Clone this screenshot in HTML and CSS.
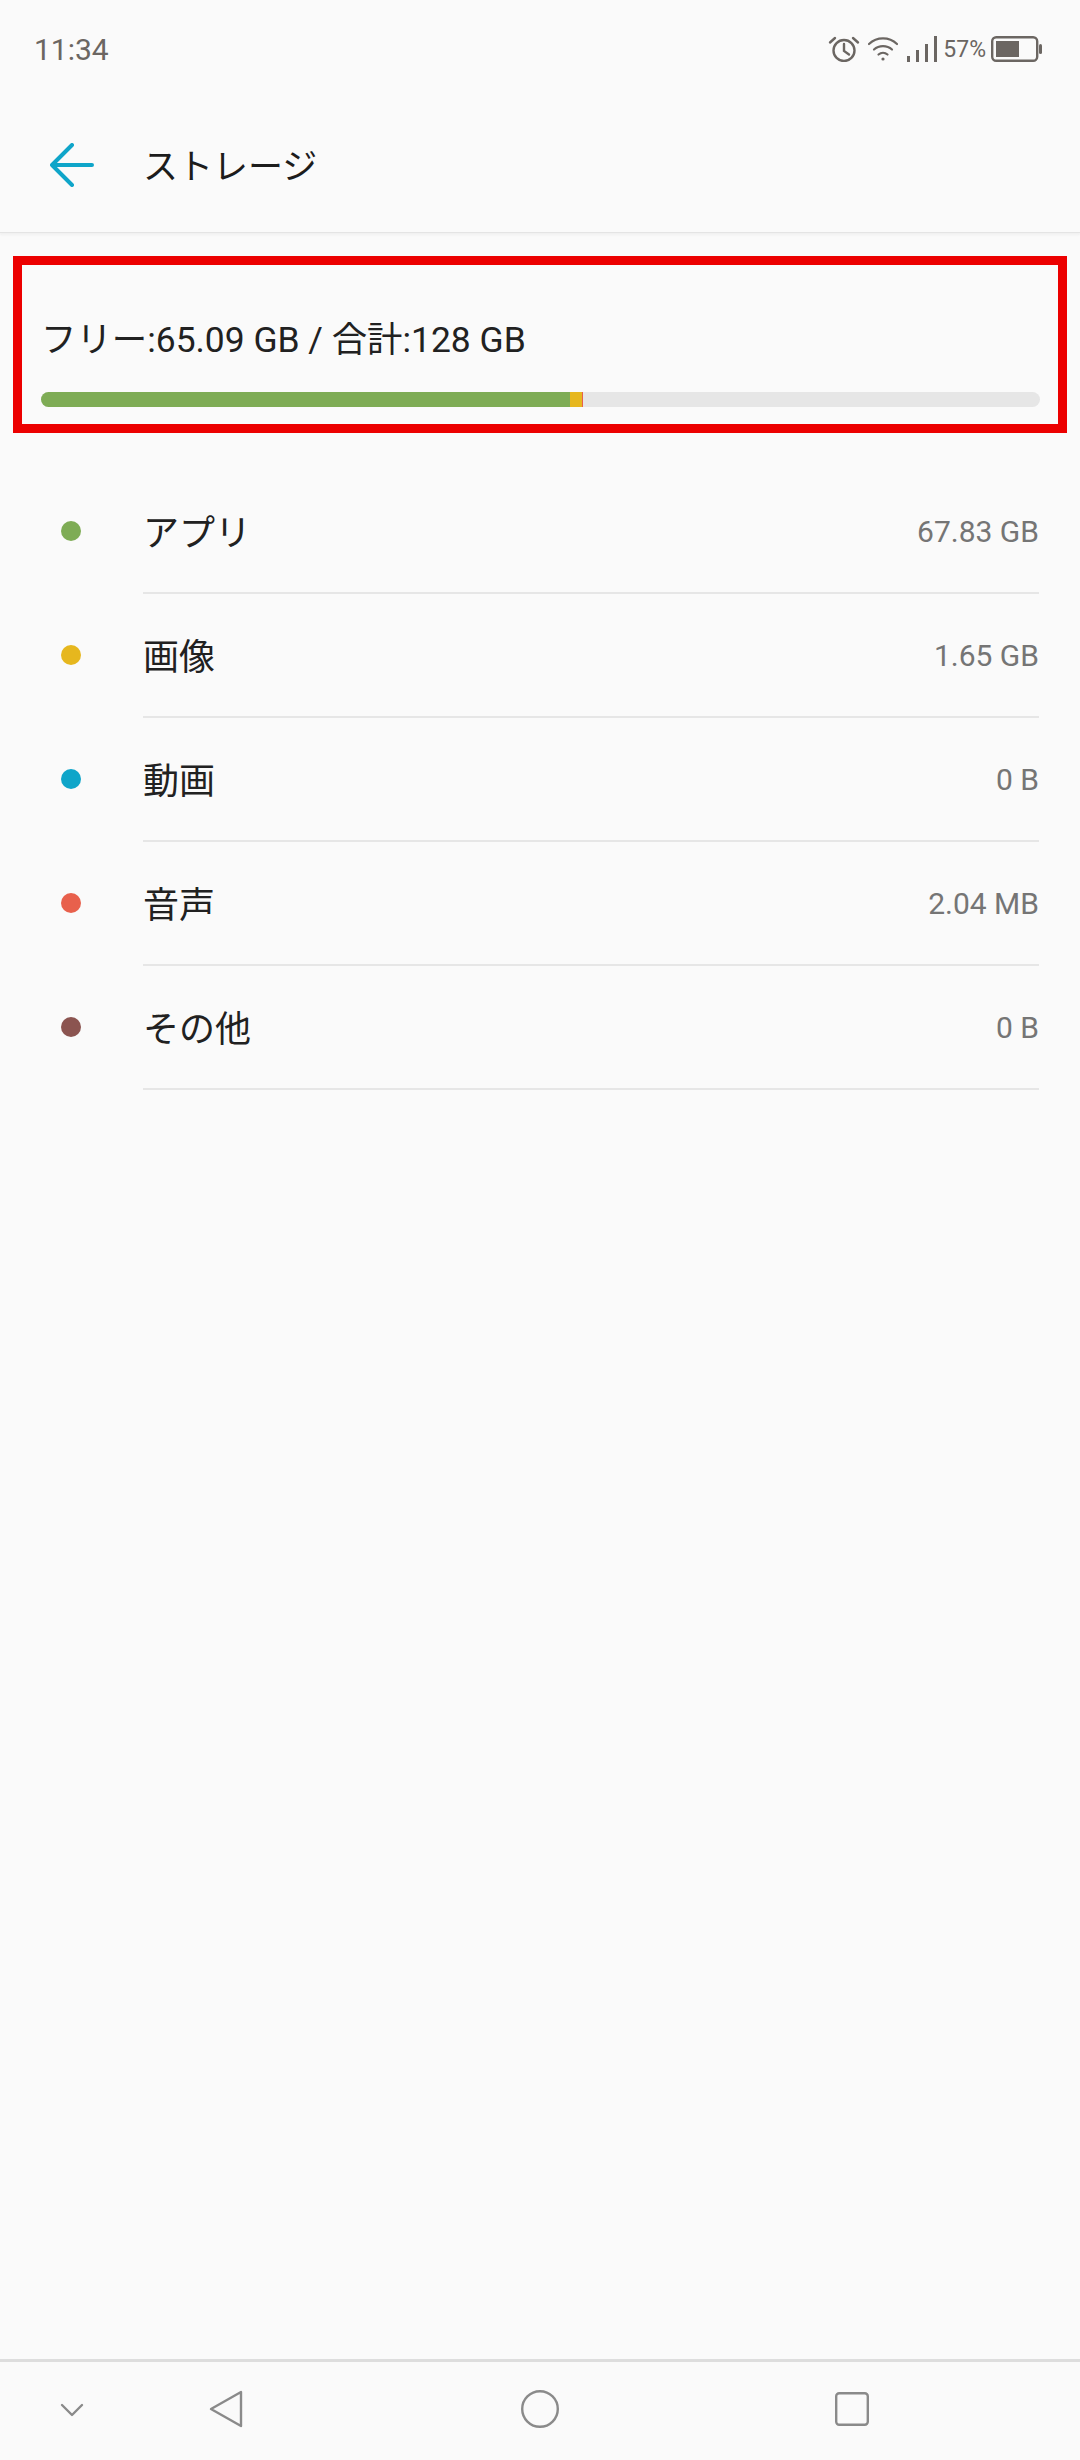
FILE: index.html
```html
<!DOCTYPE html>
<html lang="ja">
  <head>
    <meta charset="utf-8">
    <title>ストレージ</title>
    <link rel="stylesheet" href="styles.css">
  </head>
  <body>
    <div class="phone">
      <div class="status-bar">
        <div class="status-time">11:34</div>
        <div class="status-icons">
          <svg class="icon-alarm" width="32" height="26" viewBox="0 0 32 26" fill="none" stroke="#6b6662" stroke-width="2.4" stroke-linecap="round">
            <circle cx="16" cy="14.5" r="10.5"/>
            <path d="M16 8v7l5 3.5"/>
            <path d="M2 6.5 7 2M30 6.5 25 2"/>
          </svg>
          <svg class="icon-wifi" width="30" height="24" viewBox="0 0 30 24" fill="none" stroke="#6b6662" stroke-width="2.2" stroke-linecap="round">
            <path d="M1 7C9-.5 21-.5 29 7"/>
            <path d="M6 12.5c5-4.5 13-4.5 18 0"/>
            <path d="M10.5 17.5c2.600-2.200 6.400-2.200 9 0"/>
            <circle cx="15" cy="22" r="1.600" fill="#6b6662" stroke="none"/>
          </svg>
          <svg class="icon-signal" width="30" height="26" viewBox="0 0 30 26" fill="#6b6662">
            <rect x="0" y="20" width="3" height="6"/>
            <rect x="9" y="14" width="3" height="12"/>
            <rect x="18" y="8" width="3" height="18"/>
            <rect x="27" y="0" width="3" height="26"/>
          </svg>
          <span class="status-percent">57%</span>
          <svg class="icon-battery" width="51" height="26" viewBox="0 0 51 26">
            <rect x="1.200" y="1.200" width="45" height="23.600" rx="4" fill="none" stroke="#6b6662" stroke-width="2.400"/>
            <rect x="5" y="5" width="23" height="16" fill="#6b6662"/>
            <rect x="48" y="8" width="3" height="10" rx="1.500" fill="#6b6662"/>
          </svg>
        </div>
      </div>

      <div class="app-bar">
        <svg class="icon-back" width="44" height="44" viewBox="0 0 44 44" fill="none" stroke="#0fa5c9" stroke-width="4" stroke-linecap="round" stroke-linejoin="round">
          <path d="M2 22h40M22 2 2 22l20 20"/>
        </svg>
        <div class="app-title">ストレージ</div>
      </div>

      <div class="summary-box">
        <div class="summary-text">フリー:65.09 GB / 合計:128 GB</div>
        <div class="usage-bar">
          <div class="usage-apps"></div>
          <div class="usage-images"></div>
          <div class="usage-audio"></div>
        </div>
      </div>

      <div class="storage-list">
        <div class="storage-row">
          <span class="dot dot-apps"></span>
          <div class="row-body"><span class="row-label">アプリ</span><span class="row-value">67.83 GB</span></div>
        </div>
        <div class="storage-row">
          <span class="dot dot-images"></span>
          <div class="row-body"><span class="row-label">画像</span><span class="row-value">1.65 GB</span></div>
        </div>
        <div class="storage-row">
          <span class="dot dot-video"></span>
          <div class="row-body"><span class="row-label">動画</span><span class="row-value">0 B</span></div>
        </div>
        <div class="storage-row">
          <span class="dot dot-audio"></span>
          <div class="row-body"><span class="row-label">音声</span><span class="row-value">2.04 MB</span></div>
        </div>
        <div class="storage-row">
          <span class="dot dot-other"></span>
          <div class="row-body"><span class="row-label">その他</span><span class="row-value">0 B</span></div>
        </div>
      </div>

      <div class="nav-bar">
        <svg class="nav-hide" width="24" height="14" viewBox="0 0 24 14" fill="none" stroke="#8a8a8a" stroke-width="2.400" stroke-linecap="round" stroke-linejoin="round">
          <path d="M2 2l10 10L22 2"/>
        </svg>
        <svg class="nav-back" width="34" height="38" viewBox="0 0 34 38" fill="none" stroke="#8a8a8a" stroke-width="2.400" stroke-linejoin="round">
          <path d="M32 2v34L2 19z"/>
        </svg>
        <svg class="nav-home" width="38" height="38" viewBox="0 0 38 38" fill="none" stroke="#8a8a8a" stroke-width="2.400">
          <circle cx="19" cy="19" r="17.800"/>
        </svg>
        <svg class="nav-recent" width="34" height="34" viewBox="0 0 34 34" fill="none" stroke="#8a8a8a" stroke-width="2.400">
          <rect x="1.200" y="1.200" width="31.600" height="31.600" rx="3"/>
        </svg>
      </div>
    </div>
  </body>
</html>
```

FILE: styles.css
```css
body {
  margin: 0;
  background-color: #fafafa;
  font-family: Roboto, "Noto Sans CJK JP", sans-serif;
}
.phone {
  width: 1080px;
  height: 2460px;
  display: flex;
  flex-direction: column;
  overflow: hidden;
}
.status-bar {
  height: 64px;
  padding: 36px 38px 0 34px;
  box-sizing: border-box;
  display: flex;
  justify-content: space-between;
  align-items: flex-start;
  color: #6b6662;
}
.status-time {
  font-size: 30px;
  line-height: 28px;
}
.status-icons {
  display: flex;
  align-items: center;
  height: 26px;
}
.status-icons svg {
  flex: none;
}
.icon-alarm {
  margin-right: 8px;
}
.icon-wifi {
  margin-right: 9px;
}
.icon-signal {
  margin-right: 6px;
}
.status-percent {
  font-size: 23px;
  margin-right: 5px;
}
.app-bar {
  height: 169px;
  box-sizing: border-box;
  padding: 32px 0 0 50px;
  display: flex;
  align-items: center;
  border-bottom: 1px solid #e4e4e4;
  box-shadow: 0 2px 2px #f0f0f0;
}
.icon-back {
  margin: 2px 49px 0 0;
}
.app-title {
  font-size: 35px;
  color: #1c1c1c;
  margin-bottom: 2px;
}
.summary-box {
  margin: 23px 13px 0;
  height: 177px;
  box-sizing: border-box;
  border: 9px solid #ec0000;
  padding: 50px 18px 0 19px;
}
.summary-text {
  font-size: 35.4px;
  line-height: 50px;
  color: #212121;
}
.usage-bar {
  margin-top: 27px;
  height: 15px;
  border-radius: 8px;
  background-color: #e6e6e6;
  display: flex;
  overflow: hidden;
}
.usage-apps {
  width: 529px;
  background-color: #7eac55;
}
.usage-images {
  width: 12px;
  background-color: #e6b71e;
}
.usage-audio {
  width: 1px;
  background-color: #e8604c;
}
.storage-list {
  margin-top: 37px;
}
.storage-row {
  height: 124px;
  display: flex;
}
.dot {
  flex: none;
  width: 20px;
  height: 20px;
  border-radius: 50%;
  margin: 51px 62px 0 61px;
}
.dot-apps {
  background-color: #7eac55;
}
.dot-images {
  background-color: #e6b71e;
}
.dot-video {
  background-color: #0fa5c9;
}
.dot-audio {
  background-color: #e8604c;
}
.dot-other {
  background-color: #8b5450;
}
.row-body {
  flex: none;
  width: 896px;
  box-sizing: border-box;
  border-bottom: 2px solid #e6e6e6;
  display: flex;
  justify-content: space-between;
  align-items: center;
  padding-bottom: 2px;
}
.row-label {
  font-size: 36px;
  color: #212121;
}
.row-value {
  font-size: 30px;
  color: #757575;
  padding-top: 2px;
}
.nav-bar {
  margin-top: auto;
  height: 101px;
  box-sizing: border-box;
  border-top: 3px solid #dddddd;
  position: relative;
}
.nav-bar svg {
  position: absolute;
}
.nav-hide {
  left: 60px;
  top: 41px;
}
.nav-back {
  left: 209px;
  top: 28px;
}
.nav-home {
  left: 521px;
  top: 28px;
}
.nav-recent {
  left: 835px;
  top: 30px;
}
```
